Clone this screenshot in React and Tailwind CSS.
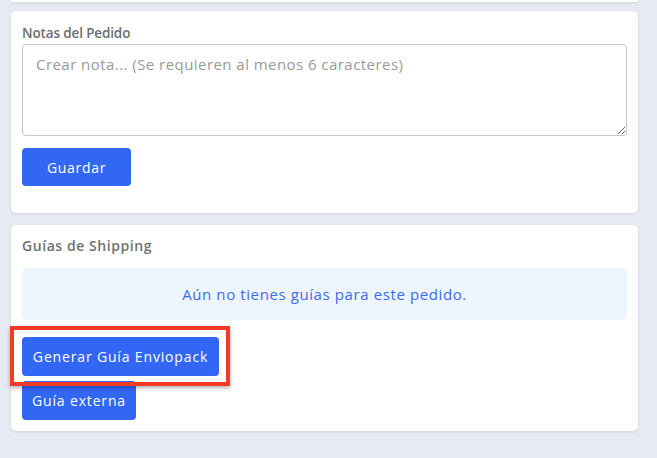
export default function App() {
  const font = { fontFamily: '"Open Sans", "Noto Sans", sans-serif' };
  return (
    <div className="w-[657px] h-[458px] overflow-hidden bg-[#e6ebf3] pl-[11px] pr-[19px]" style={font}>
      {/* previous card tail */}
      <div className="h-[2px] bg-white rounded-b shadow-[0_1px_3px_rgba(0,0,0,0.12)]" />

      {/* Notas del Pedido */}
      <section className="mt-[9px] bg-white rounded-[5px] shadow-[0_1px_3px_rgba(0,0,0,0.1)] pt-[12px] pb-[27px] px-[11px]">
        <h2 className="text-[13.5px] leading-[20px] font-semibold tracking-[-0.01em] text-[#6e6e6e] mb-[1px]">Notas del Pedido</h2>
        <textarea
          placeholder="Crear nota... (Se requieren al menos 6 caracteres)"
          className="block w-full h-[92px] border border-[#c4c4c4] rounded-[4px] px-[13px] py-[8px] text-[15px] leading-[22px] tracking-[0.03em] text-[#555] placeholder:text-[#9a9a9a] outline-none"
        />
        <button className="mt-[12px] h-[38px] w-[109px] rounded-[4px] bg-[#3267f6] text-white text-[14px] tracking-[0.05em]">
          Guardar
        </button>
      </section>

      {/* Guías de Shipping */}
      <section className="relative mt-[12px] bg-white rounded-[5px] shadow-[0_1px_3px_rgba(0,0,0,0.1)] pt-[11px] pb-[11px] px-[11px]">
        <h2 className="text-[14px] leading-[20px] font-semibold tracking-[0.04em] text-[#707070]">Guías de Shipping</h2>
        <div className="mt-[12px] h-[52px] rounded-[5px] bg-[#eef5ff] flex items-center justify-center text-[15px] tracking-[0.04em] text-[#3a6cf2]">
          Aún no tienes guías para este pedido.
        </div>
        <div className="mt-[17px] flex flex-col items-start gap-[5px]">
          <button className="h-[39px] w-[197px] rounded-[4px] bg-[#3267f6] text-white text-[14px] tracking-[0.06em]">
            Generar Guía Enviopack
          </button>
          <button className="h-[39px] w-[114px] rounded-[4px] bg-[#3267f6] text-white text-[14px] tracking-[0.06em]">
            Guía externa
          </button>
        </div>
        {/* annotation highlight */}
        <div className="absolute left-[-1px] top-[101px] w-[220px] h-[60px] border-[4px] border-[#f23a25] shadow-[0_2px_4px_rgba(0,0,0,0.3)] pointer-events-none" />
      </section>
    </div>
  );
}
